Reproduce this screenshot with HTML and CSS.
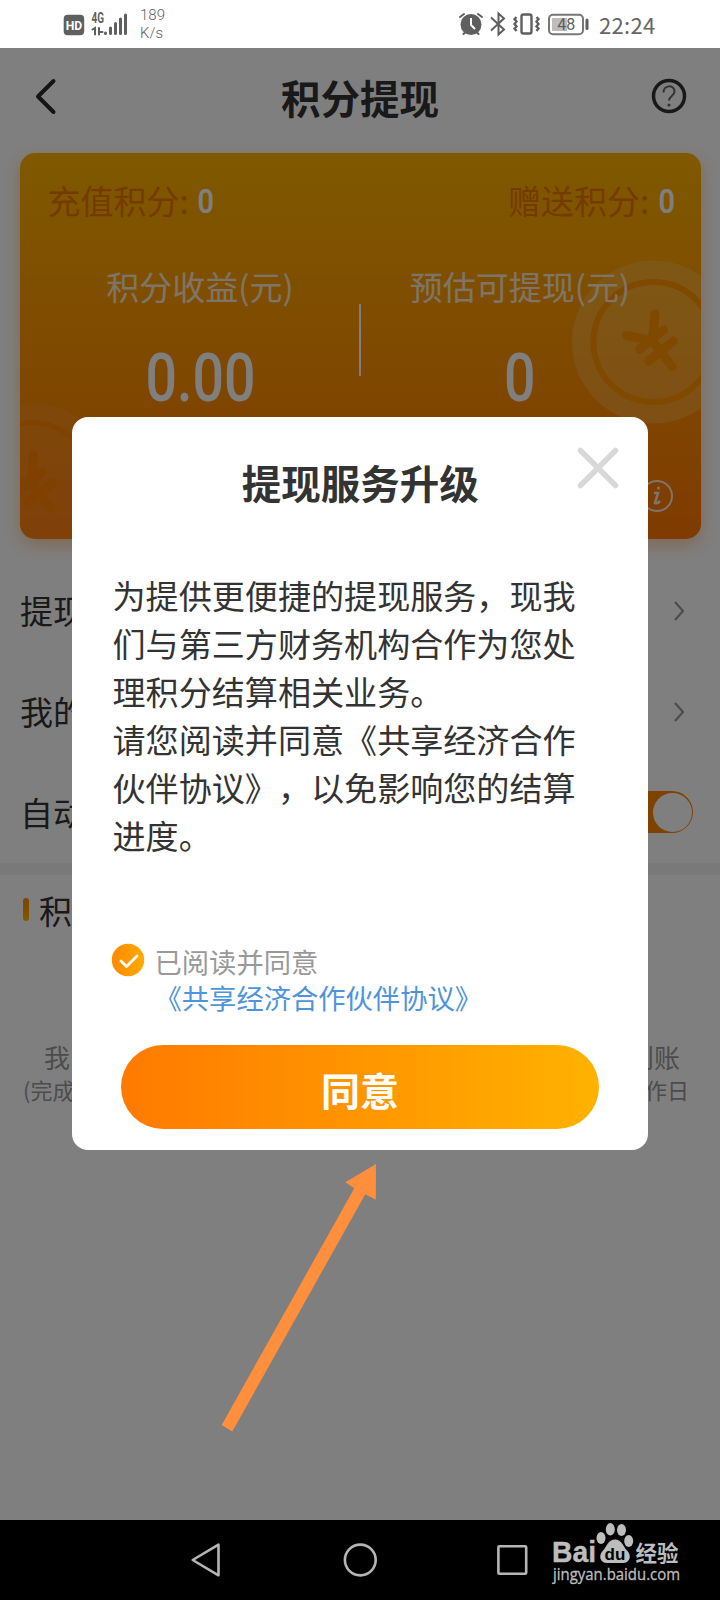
FILE: index.html
```html
<!DOCTYPE html>
<html lang="zh-CN">
<head>
<meta charset="utf-8">
<title>积分提现</title>
<link rel="stylesheet" href="styles.css">
</head>
<body>
<div class="phone">
  <div class="status">
    <svg class="status-left" width="70" height="48" viewBox="0 0 70 48">
      <rect x="0.700" y="14.700" width="20.500" height="20.500" rx="4" fill="#5f5f5f"/>
      <text x="11" y="29.700" text-anchor="middle" class="t-hd" textLength="16.500" lengthAdjust="spacingAndGlyphs">HD</text>
      <text x="28.500" y="23" class="t-4g" textLength="12.500" lengthAdjust="spacingAndGlyphs">4G</text>
      <g stroke="#5f5f5f" stroke-linecap="round" fill="none">
        <path d="M29.500 29.500l2.500-1.500v6.500M36 28v6.500M37 32h2.500" stroke-width="2"/>
        <path d="M42.500 33v.5M47.500 28v5.500M52.500 23.500v10M57.500 19v14.500M62.500 15v18.500" stroke-width="3"/>
      </g>
    </svg>
    <div class="speed">189<br>K/s</div>
    <svg class="status-right" width="134" height="48" viewBox="0 0 134 48">
      <g fill="none" stroke="#5f5f5f" stroke-width="2">
        <circle cx="12" cy="24.500" r="10.500" fill="#5f5f5f" stroke="none"/>
        <path d="M12 18v7l4 4" stroke="#fff"/>
        <path d="M1 17l4-3M23 17l-4-3M4.500 34l3-3M19.500 34l-3-3" stroke-linecap="round"/>
        <path d="M32 17.500L45 29.500L39.500 34.500V13.500L45 18.500L32 30.500"/>
        <rect x="62.500" y="14.500" width="10" height="19" rx="2" stroke-width="2.400"/>
        <path d="M57.500 17l-2 2 2 2.500-2 2.500 2 2.500-2 2 2 2.500M77.500 17l2 2-2 2.500 2 2.500-2 2.500 2 2-2 2.500" stroke-width="2.300"/>
        <rect x="90" y="14.700" width="34" height="19.500" rx="4" stroke="#777"/>
        <rect x="93" y="18" width="15" height="13" fill="#bdbdbd" stroke="none"/>
        <path d="M128 20v8.500" stroke-width="3" stroke-linecap="round"/>
      </g>
      <text x="107.300" y="30" text-anchor="middle" class="t-bat">48</text>
    </svg>
    <div class="clock">22:24</div>
  </div>

  <div class="app">
    <header class="head">
      <svg width="24" height="38" viewBox="0 0 24 38"><path d="M20.500 4L5 19.500l15.500 15.500" fill="none" stroke="#2a2a2a" stroke-width="4" stroke-linecap="round" stroke-linejoin="round"/></svg>
      <h1>积分提现</h1>
      <svg width="36" height="36" viewBox="0 0 36 36" fill="none" stroke="#333"><circle cx="18" cy="18" r="15.500" stroke-width="3.500"/><path d="M12.500 14.500c0-8 11-8 11-1 0 4.500-5.500 4.500-5.500 9" stroke="#666" stroke-width="2"/><circle cx="18" cy="27" r="1.600" fill="#666" stroke="none"/></svg>
    </header>

    <section class="card">
      <svg class="coins" width="681" height="386" viewBox="0 0 681 386" fill="none">
        <defs>
          <g id="yuan" stroke-width="9" stroke-linecap="round"><path d="M1.500-28L-1-1L19 25M-1-1L-27-6.500M-14 7.500L10-12M-5 19L20-1"/></g>
        </defs>
        <g transform="translate(633.500 189)">
          <circle r="81.500" fill="#ffcb7a" fill-opacity=".33"/>
          <circle r="60" stroke="#ff9300" stroke-width="6"/>
          <use href="#yuan" stroke="#ff9300"/>
        </g>
        <g transform="translate(12 331)">
          <circle r="81" fill="#ff9a3a" fill-opacity=".3"/>
          <circle r="61" stroke="#ff8400" stroke-width="5"/>
          <use href="#yuan" stroke="#ff8000"/>
        </g>
      </svg>
      <div class="points"><span>充值积分: <b class="din">0</b></span><span>赠送积分: <b class="din">0</b></span></div>
      <div class="totals">
        <div class="total"><span>积分收益(元)</span><strong>0.00</strong></div>
        <div class="total"><span>预估可提现(元)</span><strong>0</strong></div>
      </div>
      <svg class="info" width="34" height="34" viewBox="0 0 34 34" fill="none" stroke="#ffe9d5" stroke-width="2"><circle cx="17" cy="17" r="15"/><path d="M14 14h4l-3 10q3 1 5-2" stroke-width="2.500"/><circle cx="18.500" cy="9" r="1.500" fill="#ffe9d5" stroke="none"/></svg>
    </section>

    <div class="rows">
      <div class="row"><span>提现</span><svg width="12" height="22" viewBox="0 0 12 22"><path d="M2 2l8 9-8 9" fill="none" stroke="#999" stroke-width="2.200"/></svg></div>
      <div class="row"><span>我的</span><svg width="12" height="22" viewBox="0 0 12 22"><path d="M2 2l8 9-8 9" fill="none" stroke="#999" stroke-width="2.200"/></svg></div>
      <div class="row row-switch"><span>自动</span><div class="switch"><i></i></div></div>
    </div>
    <div class="band"></div>
    <div class="section"><i></i><span>积</span></div>
    <div class="note note-a"><span>我</span><span>到账</span></div>
    <div class="note note-b"><span>(完成</span><span>作日</span></div>

    <div class="mask">
      <div class="dialog">
        <svg class="close" width="44" height="44" viewBox="0 0 44 44"><path d="M4.500 4.500l35 35M39.500 4.500l-35 35" stroke="#d8d8d8" stroke-width="5.500" stroke-linecap="round"/></svg>
        <h2>提现服务升级</h2>
        <p class="copy">为提供更便捷的提现服务，现我<br>们与第三方财务机构合作为您处<br>理积分结算相关业务。<br>请您阅读并同意《共享经济合作<br>伙伴协议》，以免影响您的结算<br>进度。</p>
        <div class="agree">
          <svg width="34" height="34" viewBox="0 0 34 34"><defs><linearGradient id="g"><stop stop-color="#ff8a00"/><stop offset="1" stop-color="#ffaa00"/></linearGradient></defs><circle cx="17" cy="17" r="16.200" fill="url(#g)"/><path d="M10 18l5.500 5.500L26 13" fill="none" stroke="#fff" stroke-width="2.800" stroke-linecap="round" stroke-linejoin="round"/></svg>
          <div><span>已阅读并同意</span><a>《共享经济合作伙伴协议》</a></div>
        </div>
        <button class="ok">同意</button>
      </div>
      <svg class="arrow" width="160" height="275" viewBox="0 0 160 275"><path d="M156 3L125.300 21.300l9 6L1.700 264l10.600 6.500L145.300 33.300l10.500 5.500z" fill="#ff8f3c"/></svg>
    </div>
  </div>

  <nav class="nav">
    <svg width="530" height="80" viewBox="0 0 530 80" fill="none" stroke="#b5b5b5" stroke-width="2.600" stroke-linejoin="round">
      <path d="M218.500 24.700v30.600L192.700 40z"/><circle cx="360.300" cy="40" r="15.400"/><rect x="498.400" y="26.200" width="27.800" height="27.600" rx="1"/>
    </svg>
    <svg class="logo" width="140" height="72" viewBox="0 0 140 72" fill="#bdbdbd">
      <text x="1" y="42" class="t-bai" textLength="44" lengthAdjust="spacingAndGlyphs">Bai</text>
      <ellipse cx="50" cy="18" rx="4.500" ry="6"/><ellipse cx="59.300" cy="9.300" rx="4.500" ry="6.200"/><ellipse cx="70.500" cy="10" rx="4.500" ry="6"/><ellipse cx="77.700" cy="21" rx="4.500" ry="6"/>
      <path d="M64 19.500c7 0 8 7 12 11 5 5 3 12.500-4 12.500H56c-7 0-9-7.500-4-12.500 4-4 5-11 12-11z"/>
      <text x="64" y="39.500" text-anchor="middle" class="t-du">du</text>
      <text x="84.500" y="40.500" class="t-jy" textLength="43" lengthAdjust="spacingAndGlyphs">经验</text>
      <text x="2" y="59.500" class="t-url" textLength="127" lengthAdjust="spacingAndGlyphs">jingyan.baidu.com</text>
    </svg>
  </nav>
</div>
</body>
</html>
```
FILE: styles.css
```css
* { box-sizing: border-box; }
body { margin: 0; font-family: "Noto Sans CJK SC", sans-serif; color: #333; text-spacing-trim: space-all; }
.phone { width: 720px; height: 1600px; display: flex; flex-direction: column; overflow: hidden; background: #fff; }
svg { display: block; flex: none; }
h1, h2, p { margin: 0; }

.status { height: 48px; flex: none; display: flex; align-items: center; padding-left: 63px; color: #5f5f5f; font-family: Roboto, sans-serif; }
.speed { width: 60px; margin-left: 7px; padding-bottom: 1px; font-size: 15px; line-height: 18px; font-weight: 300; }
.status-right { margin-left: 259px; }
.clock { margin-left: 6px; font: 22px/46px "Noto Sans CJK SC", sans-serif; letter-spacing: .3px; color: #666; }
.t-hd { font: 700 13px Roboto, sans-serif; fill: #fff; }
.t-4g { font: 700 14px Roboto, sans-serif; fill: #5f5f5f; }
.t-bat { font: 16px Roboto, sans-serif; fill: #5f5f5f; }

.app { position: relative; height: 1472px; flex: none; background: #fff; }
.head { height: 105px; padding: 0 33px 9px; display: flex; justify-content: space-between; align-items: center; }
.head h1 { font-size: 39.500px; line-height: 58px; font-weight: 700; padding: 1px 0 0 12px; }

.card { position: relative; width: 681px; height: 386px; margin-left: 20px; border-radius: 15px; background: linear-gradient(#ffb200, #ff9500 50%, #ff7600); box-shadow: 0 6px 18px rgba(255,120,0,.35); }
.coins { position: absolute; left: 0; top: 0; border-radius: 15px; }
.points { position: relative; display: flex; justify-content: space-between; padding: 22px 25px 0 27.500px; font-size: 33px; line-height: 50px; color: #ea7500; }
.points > span { height: 50px; }
.din { display: inline-block; font: 600 34px/40px Roboto, sans-serif; color: #fff; transform: translateY(-1px) scaleX(.85); }
.totals { position: relative; display: flex; padding: 36px 21px 0 20px; }
.total { width: 50%; text-align: center; color: #ffe9d0; }
.total span { display: block; font-size: 33px; line-height: 50px; }
.total strong { display: inline-block; margin-top: 28px; font: 500 66px/80px Roboto, sans-serif; color: #fff; transform: scaleX(.84); }
.totals::after { content: ""; position: absolute; left: 339px; top: 79px; width: 2px; height: 72px; background: #fff; }
.info { position: absolute; left: 620px; top: 326px; }

.rows { padding-top: 21px; }
.row { height: 101px; padding: 0 35px 0 20px; display: flex; justify-content: space-between; align-items: center; font-size: 33px; }
.row span { padding-bottom: 1px; }
.row-switch { padding-right: 27px; padding-bottom: 1px; }
.switch { width: 75px; height: 42px; border-radius: 21px; background: #ff8700; padding: 1.500px; display: flex; justify-content: flex-end; }
.switch i { width: 39px; height: 39px; border-radius: 50%; background: #fff; }
.band { height: 12px; background: #f3f3f3; }
.section { height: 74px; padding: 0 0 5px 23px; display: flex; align-items: center; gap: 10px; font-size: 33px; }
.section i { width: 6px; height: 23px; border-radius: 3px; background: linear-gradient(#ff8900, #ffb200); }
.note { display: flex; justify-content: space-between; color: #999; }
.note-a { padding: 90px 40px 0 44px; font-size: 26px; line-height: 36px; }
.note-b { padding: 0 31px 0 23px; font-size: 22px; line-height: 28px; }

.mask { position: absolute; left: 0; top: 0; width: 720px; height: 1472px; padding-top: 369px; background: rgba(0,0,0,.5); }
.dialog { position: relative; width: 576px; height: 733px; margin: 0 auto; padding: 35px 40px 0 40.500px; border-radius: 16px; background: #fff; }
.close { position: absolute; left: 504px; top: 29px; }
.dialog h2 { font-size: 39.500px; line-height: 60px; font-weight: 700; text-align: center; }
.copy { padding-top: 59px; font-size: 33.100px; line-height: 48px; white-space: nowrap; }
.agree { display: flex; gap: 10px; padding-top: 84px; }
.agree svg { margin-left: -2px; }
.agree div { height: 74px; }
.agree span, .agree a { display: block; font-size: 27.300px; line-height: 36px; color: #999; white-space: nowrap; }
.agree a { color: #4f94da; margin-left: 0; }
.ok { display: block; width: 478px; height: 84px; margin: 28px 0 0 8.500px; padding: 4px 0 0; border: 0; border-radius: 42px; background: linear-gradient(90deg, #ff7a00, #ffb200); color: #fff; font: 700 39px/60px "Noto Sans CJK SC", sans-serif; }
.arrow { position: absolute; left: 220px; top: 1113px; }

.nav { height: 80px; flex: none; background: #000; display: flex; }
.logo { margin-left: 21px; }
.t-bai { font: 700 29px "Liberation Sans", sans-serif; stroke: #bdbdbd; stroke-width: .4px; }
.t-du { font: 700 17px "Liberation Sans", sans-serif; fill: #000; }
.t-jy { font: 700 22px "Noto Sans CJK SC", sans-serif; }
.t-url { font: 15.500px "Open Sans", sans-serif; stroke: #bdbdbd; stroke-width: .3px; }
```
